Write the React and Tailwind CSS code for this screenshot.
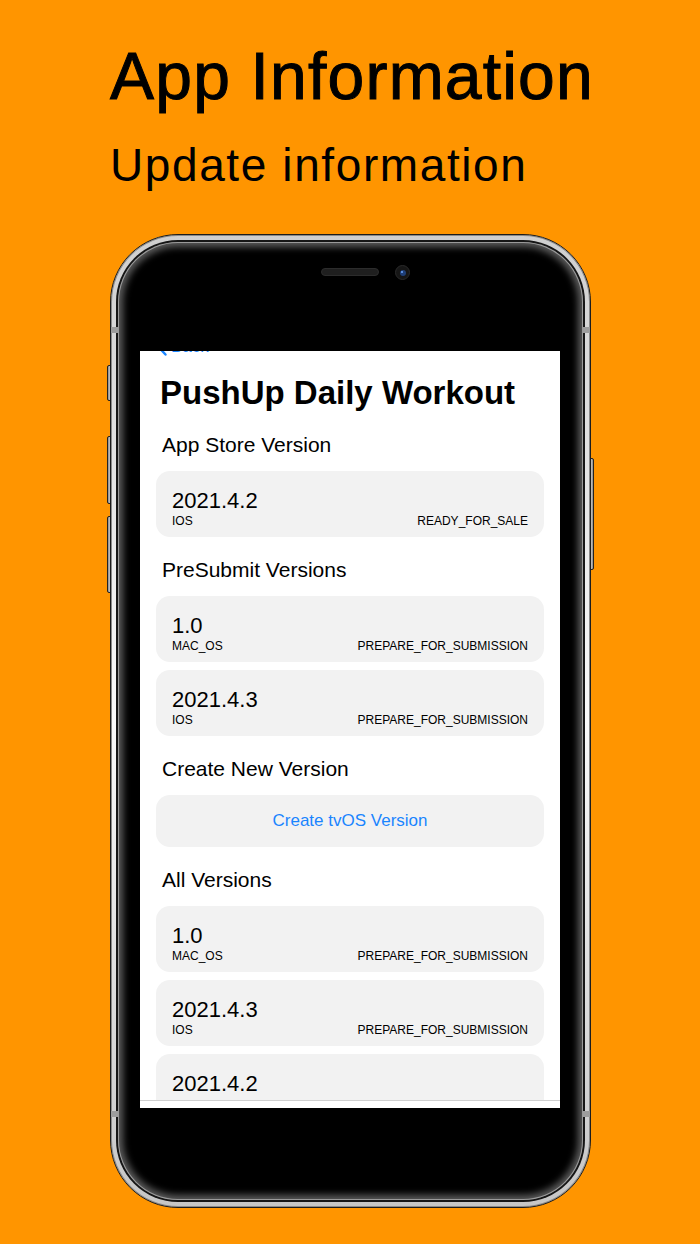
import React from 'react';

const VersionCard = ({ version, platform, state }) => (
  <div className="rounded-[14px] bg-[#f2f2f2] px-[16px] pt-[18px] pb-[8px] h-[66px] shrink-0">
    <div className="text-[22px] leading-[24px] text-black">{version}</div>
    {platform && (
      <div className="flex justify-between text-[12px] leading-[16px] text-black">
        <span>{platform}</span>
        <span>{state}</span>
      </div>
    )}
  </div>
);

const SectionLabel = ({ children, first }) => (
  <div className={`${first ? 'mt-[19px]' : 'mt-[20px]'} mb-[13px] pl-[6px] text-[21px] leading-[26px] text-black shrink-0`}>
    {children}
  </div>
);

const Screen = () => (
  <div className="w-[420px] h-[757px] bg-white overflow-hidden flex flex-col">
    <div className="flex-1 overflow-hidden px-[16px] flex flex-col">
      {/* Back button, scrolled mostly out of view */}
      <div className="-mt-[14px] h-[20px] flex items-center gap-[4px] pl-[1px] text-[17px] leading-[20px] text-[#1a85ff] shrink-0">
        <svg width="10" height="17" viewBox="0 0 10 17" fill="none">
          <path d="M8.5 1.5L2 8.5l6.5 7" stroke="#1a85ff" strokeWidth="2.4" strokeLinecap="round" strokeLinejoin="round" />
        </svg>
        <span>Back</span>
      </div>

      <h1 className="mt-[16px] pl-[4px] text-[33px] leading-[40px] font-bold text-black shrink-0">
        PushUp Daily Workout
      </h1>

      <SectionLabel first>App Store Version</SectionLabel>
      <VersionCard version="2021.4.2" platform="IOS" state="READY_FOR_SALE" />

      <SectionLabel>PreSubmit Versions</SectionLabel>
      <div className="flex flex-col gap-[8px] shrink-0">
        <VersionCard version="1.0" platform="MAC_OS" state="PREPARE_FOR_SUBMISSION" />
        <VersionCard version="2021.4.3" platform="IOS" state="PREPARE_FOR_SUBMISSION" />
      </div>

      <SectionLabel>Create New Version</SectionLabel>
      <div className="h-[52px] shrink-0 rounded-[14px] bg-[#f2f2f2] flex items-center justify-center text-[17px] text-[#1a85ff]">
        Create tvOS Version
      </div>

      <SectionLabel>All Versions</SectionLabel>
      <div className="flex flex-col gap-[8px] shrink-0">
        <VersionCard version="1.0" platform="MAC_OS" state="PREPARE_FOR_SUBMISSION" />
        <VersionCard version="2021.4.3" platform="IOS" state="PREPARE_FOR_SUBMISSION" />
        {/* last row runs under the toolbar, only its version shows */}
        <VersionCard version="2021.4.2" />
      </div>
    </div>
    {/* bottom toolbar edge */}
    <div className="h-[8px] shrink-0 border-t border-[#cfcfcf] bg-white" />
  </div>
);

const Phone = () => (
  <div className="relative mx-auto w-[481px] h-[974px]">
    {/* side buttons */}
    <div className="absolute left-[-3px] top-[131px] w-[5px] h-[36px] rounded-l-[2px] border border-[#222] bg-gradient-to-r from-[#8c8c8c] to-[#e6e6e6]" />
    <div className="absolute left-[-3px] top-[202px] w-[5px] h-[68px] rounded-l-[2px] border border-[#222] bg-gradient-to-r from-[#8c8c8c] to-[#e6e6e6]" />
    <div className="absolute left-[-3px] top-[282px] w-[5px] h-[77px] rounded-l-[2px] border border-[#222] bg-gradient-to-r from-[#8c8c8c] to-[#e6e6e6]" />
    <div className="absolute right-[-3px] top-[224px] w-[5px] h-[112px] rounded-r-[2px] border border-[#222] bg-gradient-to-l from-[#8c8c8c] to-[#e6e6e6]" />

    <div className="relative h-full rounded-[68px] border border-[#1c1c1c] bg-gradient-to-b from-[#cfcfcf] via-[#fafafa] to-[#c6c6c6] p-[5px] shadow-[inset_0_0_0_1px_#8a8a8a]">
      {/* antenna bands */}
      <div className="absolute left-0 top-[92px] w-[7px] h-[6px] bg-[#9d9d9d]" />
      <div className="absolute right-0 top-[92px] w-[7px] h-[6px] bg-[#9d9d9d]" />
      <div className="absolute left-0 top-[876px] w-[7px] h-[6px] bg-[#9d9d9d]" />
      <div className="absolute right-0 top-[876px] w-[7px] h-[6px] bg-[#9d9d9d]" />

      <div className="h-full rounded-[62px] bg-[#161616] p-[2px]">
        <div className="h-full rounded-[60px] bg-black shadow-[inset_0_0_0_1px_#9a9a9a,inset_0_0_7px_5px_#5c5c5c] flex flex-col items-center px-[22px]">
          {/* speaker + camera */}
          <div className="h-[109px] w-full flex justify-center pt-[17px] shrink-0">
            <div className="flex items-start gap-[16px]">
              <div className="w-[15px]" />
              <div className="mt-[9px] w-[58px] h-[8px] rounded-full bg-[#1f1f1f] border border-[#2c2c2c]" />
              <div className="mt-[6px] w-[15px] h-[15px] rounded-full bg-[#161616] border border-[#2a2a2a] flex items-center justify-center">
                <div className="w-[6px] h-[6px] rounded-full bg-[#1f3f78] flex items-start justify-start">
                  <div className="ml-[1px] mt-[1px] w-[2px] h-[2px] rounded-full bg-[#6fa8ff]" />
                </div>
              </div>
            </div>
          </div>
          <Screen />
        </div>
      </div>
    </div>
  </div>
);

export default function App() {
  return (
    <div className="w-[700px] h-[1244px] bg-[#ff9500] overflow-hidden font-['Liberation_Sans',Arial,sans-serif]">
      <div className="pl-[110px] pt-[43px]">
        <div className="text-[66px] leading-[66px] tracking-[1.2px] text-black [-webkit-text-stroke:1px_black]">App Information</div>
        <div className="mt-[33px] text-[46px] leading-[46px] tracking-[1.6px] text-black">Update information</div>
      </div>
      <div className="mt-[46px]">
        <Phone />
      </div>
    </div>
  );
}
